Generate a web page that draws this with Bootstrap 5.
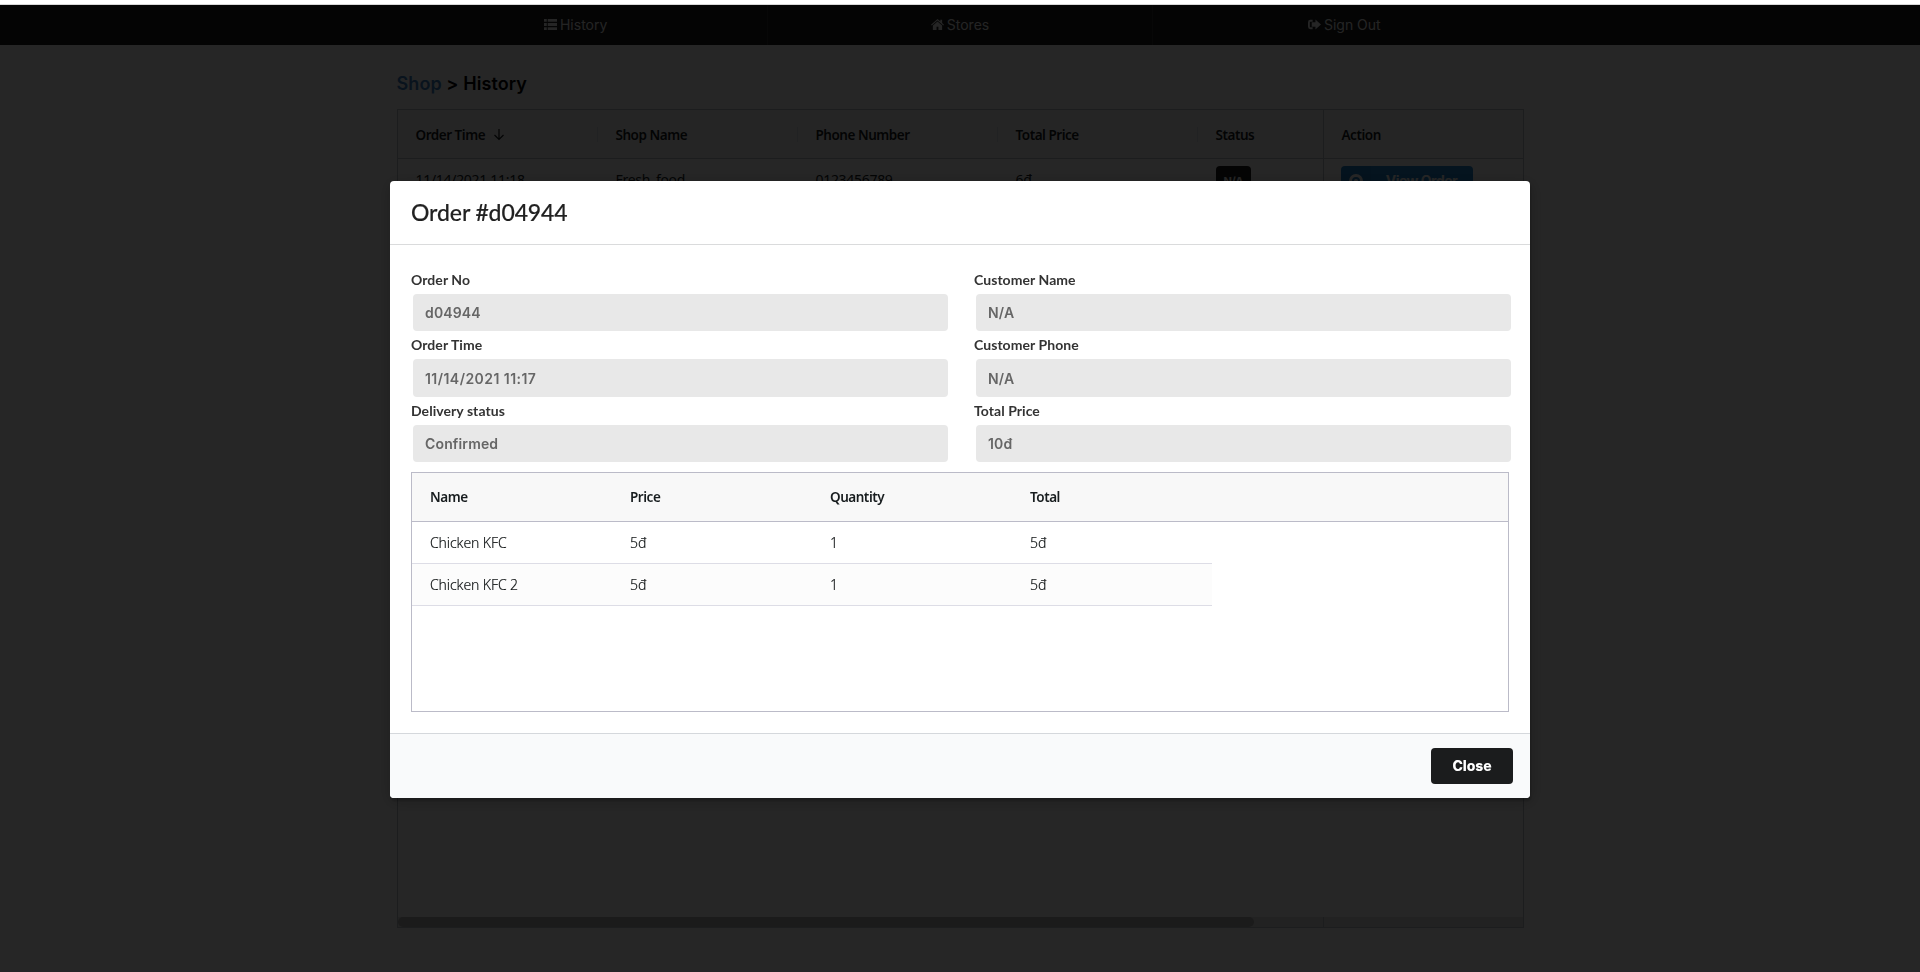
<!DOCTYPE html>
<html lang="en">
<head>
<meta charset="utf-8">
<meta name="viewport" content="width=device-width, initial-scale=1">
<title>Order history</title>
<link href="https://cdn.jsdelivr.net/npm/bootstrap@5.3.0/dist/css/bootstrap.min.css" rel="stylesheet">
<style>
  html, body { height: 100%; overflow: hidden; }
  body { font: 14px/20px Inter, sans-serif; color: rgba(0,0,0,.87); background: #fff; }
  .top-strip { height: 5px; border-bottom: 1px solid #d8d8d8; }
  .main-nav { height: 40px; background: #1b1c1d; padding: 0 384px; }
  .main-nav a { flex: 1; color: rgba(255,255,255,.95); text-decoration: none; border-right: 1px solid #303132; padding-bottom: 1px; }
  .main-nav a:last-child { border-right: 0; }
  .main-nav svg { width: 13px; height: 13px; margin-right: 3px; }
  .page { width: 1127px; margin: 0 auto; padding-top: 27px; }
  .crumbs { font-size: 18px; line-height: 24px; font-weight: 600; letter-spacing: .08px; margin: 0 0 13px; color: #000; }
  .crumbs a { color: #4183c4; text-decoration: none; }
  .grid { border: 1px solid #babfc7; font-family: "Noto Sans", sans-serif; font-size: 14px; color: #181d1f; background: #fff; }
  .grid-head { height: 49px; background: #f8f8f8; border-bottom: 1px solid #babfc7; font-size: 13.500px; font-weight: 600; letter-spacing: -.47px; padding-top: 1px; }
  .cell { width: 200px; flex: none; padding-left: 18px; display: flex; align-items: center; position: relative; }
  .history { height: 819px; }
  .history .grid-head .cell:not(.pin):not(.no-bar)::after { content: ""; position: absolute; right: 0; top: 16px; width: 1px; height: 15px; background: #dde2eb; }
  .history .cell.last { width: 125px; }
  .history .pin { width: 200px; border-left: 1px solid #babfc7; padding-left: 17px; }
  .history .grid-head .pin { margin-top: -1px; padding: 1px 0 0 18px; }
  .history .grid-row { height: 42px; letter-spacing: -.3px; }
  .history .grid-row .cell { padding-top: 11px; align-items: flex-start; }
  .history .grid-row .last, .history .grid-row .pin { padding-top: 7px; }
  .tag { background: #1b1c1d; color: #fff; font: 700 11px/14px Inter, sans-serif; padding: 8px 8px; border-radius: 4px; width: 35px; text-align: center; }
  .view-btn { background: #2185d0; color: #fff; font: 700 14px/29px Inter, sans-serif; letter-spacing: -.5px; border-radius: 4px; width: 132px; height: 30px; overflow: hidden; }
  .view-btn i { width: 30px; height: 30px; background: rgba(0,0,0,.05); }
  .scroll-track { height: 10px; background: #e4e4e4; }
  .scroll-thumb { width: 856px; height: 10px; border-radius: 5px; background: #b2b2b2; }
  .scroll-end { width: 200px; border-left: 1px solid #babfc7; }
  .dimmer { position: fixed; inset: 5px 0 0 0; background: rgba(0,0,0,.85); z-index: 1050; }
  .modal { top: 5px; }
  .modal-dialog { width: 1140px; max-width: 1140px; margin: 176px auto 0; }
  .modal-content { height: 617px; border: 0; border-radius: 4px; box-shadow: 1px 3px 3px rgba(0,0,0,.2), 1px 3px 15px 2px rgba(0,0,0,.2); }
  .modal-header { height: 64px; padding: 0 21px; border-bottom: 1px solid #dadbdc; align-items: flex-start; }
  .modal-title { font: 500 23px/30px Lato, sans-serif; letter-spacing: -.12px; -webkit-text-stroke: .15px; padding-top: 16px; }
  .modal-body { padding: 27px 21px 0; }
  .fields { display: grid; grid-template-columns: 537px 537px; column-gap: 26px; }
  .fields label { display: block; font: 700 14px/15px Lato, sans-serif; letter-spacing: .06px; color: #333; height: 22px; margin: 0; }
  .fields .form-control { height: 37px; width: 535px; margin: 0 0 6px 2px; border: 0; border-radius: 4px; background: #e8e8e8; color: #666; font: 600 14px/17px Inter, sans-serif; letter-spacing: .15px; padding: 10px 12px; }
  .fields .tall { height: 38px; }
  .fields .stamp { letter-spacing: .45px; }
  .items { height: 240px; width: 1098px; margin-top: 4px; border-color: #bbbbc8; }
  .items .grid-head { height: 49px; padding: 0 0 1px; border-color: #bbbbc8; }
  .items .grid-row { height: 42px; width: 800px; border-bottom: 1px solid #dddde6; letter-spacing: -.1px; color: #0d1112; font-weight: 300; -webkit-text-stroke: .15px; padding-top: 1px; }
  .items .odd { background: #fcfcfc; }
  .modal-footer { height: 65px; padding: 0 17px 0 0; border-top: 1px solid #d5d8dc; background: #f9fafb; border-radius: 0 0 4px 4px; }
  .close-btn { width: 82px; height: 36px; background: #1b1c1d; color: #fff; font: 800 14px/14px Inter, sans-serif; letter-spacing: -.1px; border: 0; border-radius: 4px; margin: 0; }
</style>
</head>
<body>
<div class="top-strip"></div>
<nav class="main-nav d-flex">
  <a href="#" class="d-flex align-items-center justify-content-center"><svg viewBox="0 0 14 14" fill="currentColor"><path d="M0 1h3v3H0zM4 1h10v3H4zM0 5.500h3v3H0zM4 5.500h10v3H4zM0 10h3v3H0zM4 10h10v3H4z"/></svg>History</a>
  <a href="#" class="d-flex align-items-center justify-content-center"><svg viewBox="0 0 14 14" fill="currentColor"><path d="M7 1 0 7.200l.8.9L7 2.800l6.200 5.300.8-.9-2-1.800V2h-2v1.600zM7 3.800 2 8v5h4V9.500h2V13h4V8z"/></svg>Stores</a>
  <a href="#" class="d-flex align-items-center justify-content-center"><svg viewBox="0 0 14 14" fill="currentColor"><path d="M5 2H2.500A2.500 2.500 0 0 0 0 4.500v5A2.500 2.500 0 0 0 2.500 12H5v-2H2.500a.5.500 0 0 1-.5-.5v-5a.5.500 0 0 1 .5-.5H5zM8 1.500 14 7l-6 5.500V9.500H4v-5h4z"/></svg>Sign Out</a>
</nav>
<main class="page">
  <h1 class="crumbs"><a href="#">Shop</a> &gt; History</h1>
  <div class="grid history d-flex flex-column">
    <div class="grid-head d-flex">
      <div class="cell">Order Time<svg class="ms-2" width="12" height="13" viewBox="0 0 12 13" fill="none" stroke="currentColor" stroke-width="1.200"><path d="M6 1v10.500M1.500 7 6 11.500 10.500 7"/></svg></div>
      <div class="cell">Shop Name</div>
      <div class="cell">Phone Number</div>
      <div class="cell">Total Price</div>
      <div class="cell last no-bar">Status</div>
      <div class="cell pin">Action</div>
    </div>
    <div class="grid-row d-flex">
      <div class="cell">11/14/2021 11:18</div>
      <div class="cell">Fresh_food</div>
      <div class="cell">0123456789</div>
      <div class="cell">6đ</div>
      <div class="cell last"><span class="tag">N/A</span></div>
      <div class="cell pin"><div class="view-btn d-flex"><i class="d-flex align-items-center justify-content-center"><svg width="14" height="14" viewBox="0 0 14 14"><circle cx="7" cy="7" r="5.500" fill="none" stroke="#fff" stroke-width="3"/><circle cx="7" cy="7" r="2" fill="#fff"/></svg></i><span class="flex-grow-1 text-center">View Order</span></div></div>
    </div>
    <div class="scroll-track d-flex justify-content-between mt-auto"><div class="scroll-thumb"></div><div class="scroll-end"></div></div>
  </div>
</main>
<div class="dimmer"></div>
<div class="modal show d-block" tabindex="-1" role="dialog">
  <div class="modal-dialog">
    <div class="modal-content">
      <div class="modal-header"><h2 class="modal-title">Order #d04944</h2></div>
      <div class="modal-body">
        <div class="fields">
          <div><label>Order No</label><input class="form-control" disabled value="d04944"></div>
          <div><label>Customer Name</label><input class="form-control" disabled value="N/A"></div>
          <div><label>Order Time</label><input class="form-control tall stamp" disabled value="11/14/2021 11:17"></div>
          <div><label>Customer Phone</label><input class="form-control tall" disabled value="N/A"></div>
          <div><label>Delivery status</label><input class="form-control" disabled value="Confirmed"></div>
          <div><label>Total Price</label><input class="form-control" disabled value="10đ"></div>
        </div>
        <div class="grid items">
          <div class="grid-head d-flex"><div class="cell">Name</div><div class="cell">Price</div><div class="cell">Quantity</div><div class="cell">Total</div></div>
          <div class="grid-row d-flex"><div class="cell">Chicken KFC</div><div class="cell">5đ</div><div class="cell">1</div><div class="cell">5đ</div></div>
          <div class="grid-row odd d-flex"><div class="cell">Chicken KFC 2</div><div class="cell">5đ</div><div class="cell">1</div><div class="cell">5đ</div></div>
        </div>
      </div>
      <div class="modal-footer"><button class="btn close-btn">Close</button></div>
    </div>
  </div>
</div>
<script src="https://cdn.jsdelivr.net/npm/bootstrap@5.3.0/dist/js/bootstrap.bundle.min.js"></script>
</body>
</html>
